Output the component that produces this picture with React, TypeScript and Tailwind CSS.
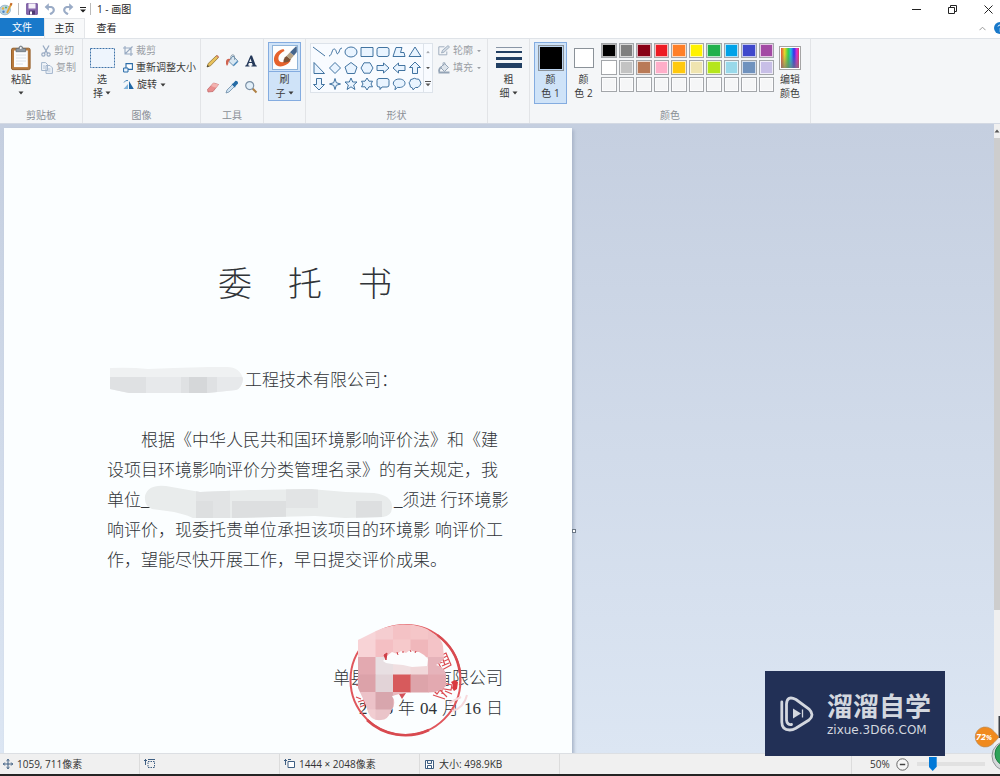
import React from "react";

const BLUE = "#2e6496";

function Caret({ className = "" }: { className?: string }) {
  return (
    <svg className={className} width="6" height="4" viewBox="0 0 6 4" aria-hidden="true">
      <path d="M0.5 0.5h5L3 3.6z" fill="currentColor" />
    </svg>
  );
}

function Group({ label, className, children }: { label?: string; className: string; children: React.ReactNode }) {
  return (
    <section className={`flex shrink-0 flex-col border-r border-[#e2e4e7] ${className}`}>
      <div className="flex h-[68px] items-start pt-[3px]">{children}</div>
      <h2 className="h-4 text-center leading-4 text-[#8a8f96]">{label}</h2>
    </section>
  );
}

function BigButton({
  icon,
  lines,
  caret,
  className = "",
}: {
  icon: React.ReactNode;
  lines: [string, string];
  caret?: boolean;
  className?: string;
}) {
  return (
    <button type="button" className={`flex shrink-0 flex-col items-center border text-[#3b3b3b] ${className}`}>
      <span className="flex h-[29px] items-center justify-center">{icon}</span>
      <span className="h-[14px] leading-[14px]">{lines[0]}</span>
      <span className="flex h-[14px] items-center justify-center gap-0.5 leading-[14px]">
        {lines[1]}
        {caret && <Caret />}
      </span>
    </button>
  );
}

function SmallButton({
  icon,
  label,
  caret,
  disabled,
}: {
  icon: React.ReactNode;
  label: string;
  caret?: boolean;
  disabled?: boolean;
}) {
  return (
    <button
      type="button"
      disabled={disabled}
      className="flex h-[17px] items-center gap-[3px] whitespace-nowrap text-[#3b3b3b] disabled:text-[#9b9fa5]"
    >
      {icon}
      <span>{label}</span>
      {caret && <Caret className={disabled ? "scale-75" : ""} />}
    </button>
  );
}

const AppIcon = () => (
  <svg width="13" height="14" viewBox="0 0 13 14" aria-hidden="true">
    <ellipse cx="5" cy="8" rx="5.5" ry="4.8" fill="#b9d4e4" stroke="#86a9bd" strokeWidth=".7" />
    <circle cx="3" cy="6.5" r="1.2" fill="#e9b245" />
    <circle cx="6" cy="5.5" r="1.1" fill="#5fae64" />
    <circle cx="3.5" cy="9.8" r="1.2" fill="#4d84c4" />
    <path d="M7 11L11.5 1.5" stroke="#e2a53a" strokeWidth="1.8" />
    <path d="M10.6 3.4l1-2.2" stroke="#c46a2e" strokeWidth="2" />
  </svg>
);

const SaveIcon = () => (
  <svg width="12" height="12" viewBox="0 0 12 12" aria-hidden="true">
    <path d="M.7.7h10.6v10.6H.7z" fill="#8a6aae" stroke="#71509a" />
    <path d="M2.5.5h7v5h-7z" fill="#f5f1fa" />
    <path d="M3 7.5h6v4H3z" fill="#4e3a70" />
    <path d="M4 8.5h2v3H4z" fill="#fff" />
  </svg>
);

const UndoIcon = ({ flip }: { flip?: boolean }) => (
  <svg width="12" height="12" viewBox="0 0 12 12" className={flip ? "-scale-x-100" : ""} aria-hidden="true">
    <path d="M3 4h4.200a3.200 3.200 0 0 1 .8 6L6 11.200" fill="none" stroke="#9aabc6" strokeWidth="2.200" />
    <path d="M4.800.2v7.600L.6 4z" fill="#9aabc6" />
  </svg>
);

const PasteIcon = () => (
  <svg width="22" height="26" viewBox="0 0 22 26" aria-hidden="true">
    <rect x="1.5" y="3.2" width="18.6" height="21.4" rx="1.5" fill="#b87a3d" stroke="#96612c" />
    <rect x="4" y="5.5" width="13.8" height="16.6" fill="#fbfcfd" />
    <path d="M6 10h10M6 13h10M6 16h10M6 19h7" stroke="#d3dae2" strokeWidth=".8" />
    <path d="M6 3.5h2.7Q9 1 10.8 1T13 3.5h2.7v3.2H6z" fill="#8d969f" stroke="#626b74" strokeWidth=".7" />
    <circle cx="10.8" cy="3" r=".9" fill="#fff" />
  </svg>
);

const CutIcon = () => (
  <svg width="10" height="12" viewBox="0 0 10 12" aria-hidden="true">
    <path d="M2 .5l4.6 8M8 .5L3.4 8.500" stroke="#98aac2" strokeWidth="1.3" />
    <circle cx="2.400" cy="9.500" r="1.600" fill="none" stroke="#98aac2" strokeWidth="1.200" />
    <circle cx="7.600" cy="9.500" r="1.600" fill="none" stroke="#98aac2" strokeWidth="1.200" />
  </svg>
);

const CopyIcon = () => (
  <svg width="12" height="12" viewBox="0 0 12 12" aria-hidden="true">
    <path d="M.6.6h4L6.500 2.500v6H.6zM5 3.500h4l2.400 2.400v5.500H5z" fill="#f1f5fa" stroke="#a2b5cc" />
    <path d="M2 4h2M2 6h2M6.500 7h3M6.500 9h3" stroke="#a2b5cc" strokeWidth=".8" />
  </svg>
);

const SelectIcon = () => (
  <svg width="25" height="20" viewBox="0 0 25 20" aria-hidden="true">
    <rect x=".5" y=".5" width="24" height="19" fill="#eef5fd" stroke="#3e73a8" strokeDasharray="2 1" />
  </svg>
);

const CropIcon = () => (
  <svg width="10" height="10" viewBox="0 0 10 10" aria-hidden="true">
    <path d="M2 0v8h8M0 2h8v8M2 8L9.500.5" fill="none" stroke="#98aac2" strokeWidth="1.100" />
  </svg>
);

const ResizeIcon = () => (
  <svg width="10" height="10" viewBox="0 0 10 10" aria-hidden="true">
    <path d="M3 .6h6.400v5.800H3z" fill="#fff" stroke="#2b6ca8" strokeWidth="1.100" />
    <path d="M.6 5h4.400v4H.6z" fill="#e8f3fd" stroke="#2b6ca8" />
  </svg>
);

const RotateIcon = () => (
  <svg width="11" height="11" viewBox="0 0 11 11" aria-hidden="true">
    <path d="M6 10V2l4.800 8z" fill="#1e66a5" />
    <path d="M5 10H.5L5 5z" fill="#7fb2da" />
    <path d="M1 3.500Q2.500.8 5 1.500" fill="none" stroke="#4a87b8" />
  </svg>
);

const tools: { name: string; art: React.ReactNode }[] = [
  {
    name: "铅笔",
    art: (
      <>
        <path d="M1 13l1.200-3.500L10.500 1.500l2 2L4.500 11.800z" fill="#e8c15c" stroke="#8e7336" strokeWidth=".8" />
        <path d="M10 2l2 2 1-1.300L11.400 1z" fill="#cc7c6a" />
        <path d="M1 13l.7-2 1.400 1.300z" fill="#333" />
      </>
    ),
  },
  {
    name: "用颜色填充",
    art: (
      <>
        <path d="M3.500 7L8 2l5 5.200-4.600 4.600z" fill="#d8e7f2" stroke="#5f87a8" strokeWidth=".9" />
        <path d="M6 5.500Q5 1 8 .8q2 0 1.500 5" fill="none" stroke="#71889a" strokeWidth=".8" />
        <path d="M5.500 5Q1.500 4 1 7.500T2 12q1.600-1.600 1.500-4z" fill="#cf6552" />
        <path d="M8.500 11.500l4-4" stroke="#4486ba" strokeWidth="1.300" />
      </>
    ),
  },
  {
    name: "文本",
    art: (
      <path
        d="M6.500 1.500h1.500l3.600 9.600 1.200.7v.7H7.400v-.7l1.300-.5-.8-2.200H4.900l-.8 2.200 1.400.5v.7H1.200v-.7l1.200-.7zM6.400 4.600L5.200 8h2.500z"
        fill="#25395a"
      />
    ),
  },
  {
    name: "橡皮擦",
    art: (
      <>
        <path d="M1.500 9.500L7.500 3 12.500 4.500 7 11.500 2 12z" fill="#e98d8d" stroke="#bd6464" strokeWidth=".7" />
        <path d="M7.500 3l5 1.500L10 7.800 5 6z" fill="#f3b3b0" />
      </>
    ),
  },
  {
    name: "颜色选取器",
    art: (
      <>
        <path d="M1 13l1-3 5.500-5.500 2 2L4 12z" fill="#cfe3f4" stroke="#6b8aa6" strokeWidth=".8" />
        <path d="M6.500 4l1.500-.6L10.500.8q2.700 0 2.500 2.600L10.600 6l-.6 1.700z" fill="#256ba5" />
      </>
    ),
  },
  {
    name: "放大镜",
    art: (
      <>
        <path d="M8.500 8.500l4 4" stroke="#af8145" strokeWidth="2" />
        <circle cx="5.700" cy="5.600" r="4" fill="#e2eff9" stroke="#7c91a6" strokeWidth="1.200" />
      </>
    ),
  },
];

const shapes: [string, string][] = [
  ["直线", "M1 2l12 9"],
  ["曲线", "M1 11C4 11 4 3 6.500 4S8 10 10 8.500 11 3 14 3"],
  ["椭圆形", "M1 7a6 5 0 1 0 12 0a6 5 0 1 0 -12 0z"],
  ["矩形", "M1 2.500h12v9H1z"],
  ["圆角矩形", "M3 2.500h8q2 0 2 2v5q0 2-2 2H3q-2 0-2-2v-5q0-2 2-2z"],
  ["多边形", "M1 11.500L4 2.500h6L8.500 7.500h3.500l1 4z"],
  ["三角形", "M7 2l6 9.500H1z"],
  ["直角三角形", "M2 1.500v11h10.500z"],
  ["菱形", "M7 1.500L12.500 7 7 12.500 1.500 7z"],
  ["五边形", "M7 1.500L13 6l-2.300 6.500H3.300L1 6z"],
  ["六边形", "M4 1.800h6L13 7l-3 5.200H4L1 7z"],
  ["右箭头", "M1 4.500h6.500V2L13 7l-5.500 5V9.500H1z"],
  ["左箭头", "M13 4.500H6.500V2L1 7l5.500 5V9.500H13z"],
  ["上箭头", "M7 1l5.500 5.500h-3v6h-5v-6h-3z"],
  ["下箭头", "M7 13l5.500-5.500h-3v-6h-5v6h-3z"],
  ["四角星", "M7 1.500l1.300 4.200L12.500 7 8.300 8.300 7 12.500 5.700 8.300 1.500 7l4.200-1.300z"],
  ["五角星", "M7 1l1.700 4H13L9.700 8l1.200 4.500L7 9.800l-3.900 2.700L4.300 8 1 5h4.300z"],
  ["六角星", "M7 1l2 3.200h3.500L11 7l1.500 2.800H9L7 13 5 9.800H1.500L3 7 1.500 4.200H5z"],
  ["圆角标注", "M3 1.500h8q2 0 2 2v4.500q0 2-2 2H6L4 12.500V10H3q-2 0-2-2V3.500q0-2 2-2z"],
  ["椭圆标注", "M7 2C15 2 15 10.500 7 10.500l-1.500-.2L3 12.800 3.500 9.600C-1 7 2 2 7 2z"],
  ["云形标注", "M4 2.200Q6.500.5 8.500 2q3-.5 3.500 2 2 2.500-.2 4.600-1.300 2.700-4.300 1.900L5 12.800 4.500 11Q1.500 10.500 2 8 0 5.500 2.200 4.200 2 2.200 4 2.200z"],
];

const OutlineIcon = () => (
  <svg width="12" height="11" viewBox="0 0 12 11" aria-hidden="true">
    <path d="M6.500 1.800H.8v8h8V6.500" fill="none" stroke="#a1afbf" />
    <path d="M3.500 8l1-2.700L10 .6l1.500 1.400L6 7.200z" fill="#d4dce5" stroke="#94a4b6" strokeWidth=".8" />
  </svg>
);

const FillIcon = () => (
  <svg width="12" height="12" viewBox="0 0 12 12" aria-hidden="true">
    <path d="M2.500 5.500L6.500 1.500l4 4-4 4z" fill="#dde4eb" stroke="#94a4b6" />
    <path d="M3.500 5Q1 6 1 9.500M.5 10.500h11" fill="none" stroke="#94a4b6" strokeWidth="1.800" />
    <path d="M5 4V.8h2V3" fill="none" stroke="#94a4b6" strokeWidth=".8" />
  </svg>
);

const BrushIcon = () => (
  <svg width="26" height="25" viewBox="0 0 26 25" aria-hidden="true">
    <rect x=".5" y=".5" width="25" height="24" fill="#fdfefe" stroke="#8fb4d9" />
    <path d="M11.500 4C4 5.500.5 12 2.500 17.500 4.500 23 13 23 18.500 16l-3-1.500C12 18 7.500 18 6.500 14.500 6 11 8 8 12.500 6z" fill="#e5622d" />
    <path d="M11.500 17.500q-.5-4 3-6.500l4.500 3.500q-2 3.500-7.500 3z" fill="#7d5336" />
    <path d="M14.500 11L18 7.300l4 3.200-3.500 4z" fill="#b5a184" />
    <path d="M18 7.300L23.800 1.500h1V7L22 10.500z" fill="#45658c" />
  </svg>
);

const SizeIcon = () => (
  <svg width="26" height="24" viewBox="0 0 26 24" aria-hidden="true">
    <path d="M0 1.500h26" stroke="#8996a6" />
    <path d="M0 6h26" stroke="#213f63" strokeWidth="2" />
    <path d="M0 12.500h26" stroke="#213f63" strokeWidth="3" />
    <path d="M0 19.500h26" stroke="#213f63" strokeWidth="5" />
  </svg>
);

const SpectrumIcon = () => (
  <svg width="22" height="24" viewBox="0 0 22 24" aria-hidden="true">
    <defs>
      <linearGradient id="hue">
        <stop offset="0" stopColor="#e0503c" />
        <stop offset=".2" stopColor="#e5d82c" />
        <stop offset=".4" stopColor="#35cf4b" />
        <stop offset=".55" stopColor="#22b8e6" />
        <stop offset=".72" stopColor="#3232ea" />
        <stop offset=".88" stopColor="#df2fd0" />
        <stop offset="1" stopColor="#e2385c" />
      </linearGradient>
      <linearGradient id="shade" x2="0" y2="1">
        <stop offset=".3" stopColor="#777" stopOpacity="0" />
        <stop offset="1" stopColor="#777" stopOpacity=".7" />
      </linearGradient>
    </defs>
    <rect x=".5" y=".5" width="21" height="23" fill="#fff" stroke="#a5a5a5" />
    <rect x="2" y="2" width="18" height="20" fill="url(#hue)" />
    <rect x="2" y="2" width="18" height="20" fill="url(#shade)" />
  </svg>
);

const swatches: [string, string][] = [
  ["黑色", "bg-[#000000]"],
  ["灰色-50%", "bg-[#7f7f7f]"],
  ["深红色", "bg-[#880015]"],
  ["红色", "bg-[#ed1c24]"],
  ["橙色", "bg-[#ff7f27]"],
  ["黄色", "bg-[#fff200]"],
  ["绿色", "bg-[#22b14c]"],
  ["青绿色", "bg-[#00a2e8]"],
  ["靛蓝色", "bg-[#3f48cc]"],
  ["紫色", "bg-[#a349a4]"],
  ["白色", "bg-[#ffffff]"],
  ["灰色-25%", "bg-[#c3c3c3]"],
  ["褐色", "bg-[#b97a57]"],
  ["玫瑰色", "bg-[#ffaec9]"],
  ["金色", "bg-[#ffc90e]"],
  ["浅黄色", "bg-[#efe4b0]"],
  ["酸橙色", "bg-[#b5e61d]"],
  ["淡青绿色", "bg-[#99d9ea]"],
  ["蓝灰色", "bg-[#7092be]"],
  ["淡紫色", "bg-[#c8bfe7]"],
  ...Array.from({ length: 10 }, (_, i): [string, string] => [`自定义颜色 ${i + 1}`, "bg-[#f5f6f7]"]),
];

function Ribbon() {
  return (
    <div className="flex h-[86px] shrink-0 overflow-hidden border-y border-t-[#dfe3e8] border-b-[#d3d9e3] bg-[#f4f6f8]">
      <Group label="剪贴板" className="w-[83px]">
        <BigButton icon={<PasteIcon />} lines={["粘贴", ""]} caret className="ml-1 w-[34px] border-transparent" />
        <div className="ml-[3px] flex flex-col">
          <SmallButton disabled icon={<CutIcon />} label="剪切" />
          <SmallButton disabled icon={<CopyIcon />} label="复制" />
        </div>
      </Group>
      <Group label="图像" className="w-[118px]">
        <BigButton icon={<SelectIcon />} lines={["选", "择"]} caret className="ml-[2px] w-[34px] border-transparent" />
        <div className="ml-1 flex flex-col">
          <SmallButton disabled icon={<CropIcon />} label="裁剪" />
          <SmallButton icon={<ResizeIcon />} label="重新调整大小" />
          <SmallButton icon={<RotateIcon />} label="旋转" caret />
        </div>
      </Group>
      <Group label="工具" className="w-[63px]">
        <div className="grid w-full grid-cols-3 gap-y-3 px-[3px] pt-3">
          {tools.map((t) => (
            <button key={t.name} type="button" aria-label={t.name} className="flex justify-center">
              <svg width="14" height="14" viewBox="0 0 14 14" aria-hidden="true">
                {t.art}
              </svg>
            </button>
          ))}
        </div>
      </Group>
      <Group className="w-[42px]">
        <BigButton
          icon={<BrushIcon />}
          lines={["刷", "子"]}
          caret
          className="mx-auto w-[33px] border-[#84ace0] bg-[linear-gradient(#cfe3f8_28px,#84ace0_28px,#84ace0_29px,#cfe3f8_29px)]"
        />
      </Group>
      <Group label="形状" className="w-[182px]">
        <div className="mt-px ml-1 flex border border-[#dde3ea] bg-[#f8fbff]">
          <div className="grid grid-cols-7">
            {shapes.map(([name, d]) => (
              <button key={name} type="button" aria-label={name} className="flex h-4 w-4 items-center justify-center">
                <svg width="14" height="14" viewBox="0 0 14 14" aria-hidden="true">
                  <path d={d} fill={name === "直线" || name === "曲线" ? "none" : "#e9f4ff"} stroke={BLUE} strokeWidth=".9" />
                </svg>
              </button>
            ))}
          </div>
          <div className="flex w-[9px] flex-col border-l border-[#dde3ea] text-[#555]">
            <button type="button" aria-label="向上滚动" className="flex flex-1 items-center justify-center text-[#a5a9ae]">
              <Caret className="rotate-180 scale-75" />
            </button>
            <button type="button" aria-label="向下滚动" className="flex flex-1 items-center justify-center">
              <Caret className="scale-75" />
            </button>
            <button type="button" aria-label="更多形状" className="flex flex-1 items-center justify-center">
              <svg width="6" height="6" viewBox="0 0 6 6" aria-hidden="true">
                <path d="M0 .5h6" stroke="currentColor" />
                <path d="M.5 2.500h5L3 5.300z" fill="currentColor" />
              </svg>
            </button>
          </div>
        </div>
        <div className="ml-[5px] flex flex-col">
          <SmallButton disabled icon={<OutlineIcon />} label="轮廓" caret />
          <SmallButton disabled icon={<FillIcon />} label="填充" caret />
        </div>
      </Group>
      <Group className="w-[42px]">
        <BigButton icon={<SizeIcon />} lines={["粗", "细"]} caret className="mx-auto w-[34px] border-transparent" />
      </Group>
      <Group label="颜色" className="w-[281px]">
        <BigButton
          icon={<span className="size-[26px] border border-[#8b9299] bg-black ring-1 ring-[#bcd4ef] ring-inset" />}
          lines={["颜", "色 1"]}
          className="ml-1 h-[62px] w-[33px] border-[#84ace0] bg-[#cfe3f8]"
        />
        <BigButton
          icon={<span className="size-[20px] border border-[#8b9299] bg-white" />}
          lines={["颜", "色 2"]}
          className="w-[33px] border-transparent"
        />
        <div className="mt-px ml-px grid w-[173px] grid-cols-10 gap-[2px]">
          {swatches.map(([name, color]) => (
            <button
              key={name}
              type="button"
              aria-label={name}
              className={`h-[15px] border border-[#a3a6aa] ring-1 ring-white/70 ring-inset ${color}`}
            />
          ))}
        </div>
        <BigButton icon={<SpectrumIcon />} lines={["编辑", "颜色"]} className="w-[32px] border-transparent" />
      </Group>
    </div>
  );
}

function Seal() {
  const cells: [number, number, string][] = [
    [0, 0, "#f7d5d8"], [1, 0, "#f5cdd0"], [2, 0, "#f4c2c5"], [3, 0, "#f5c6c8"], [4, 0, "#f2c2c5"],
    [0, 1, "#f8d3d6"], [1, 1, "#f4bfc3"], [2, 1, "#f6c9cb"], [3, 1, "#f0b7bb"], [4, 1, "#f4c3c7"],
    [0, 2, "#e3a9b0"], [1, 2, "#e8dfe2"], [2, 2, "#f0dfe1"], [3, 2, "#f1d8da"], [4, 2, "#e6b3ba"],
    [0, 3, "#dca2a9"], [1, 3, "#e2d3d7"], [2, 3, "#d75a5c"], [3, 3, "#dda4aa"], [4, 3, "#e3a9b0"],
    [0, 4, "#ecc2c8"], [1, 4, "#d8a6ad"], [2, 4, "#e8b8bd"],
    [0, 5, "#f1cdd1"], [1, 5, "#eac4c9"],
  ];
  return (
    <svg
      className="absolute right-[32px] -bottom-[17px]"
      width="126"
      height="122"
      viewBox="0 0 126 122"
      aria-hidden="true"
    >
      <defs>
        <clipPath id="smudge">
          <path d="M13 21L31 12Q44 6 58 5.500 78 5 88 14 97 20 98 27L99 39Q96 44 91 46 99 48 101 55V67Q96 73 83 74H58L47 77Q52 84 46 92 43 101 36 101 27 102 24 95L20 84 13 69z" />
        </clipPath>
      </defs>
      <circle cx="60.500" cy="61" r="55" fill="none" stroke="#e0565c" strokeWidth="2" />
      <path d="M92 16a55.500 55.500 0 0 1 23 38M22 101a56 56 0 0 0 62 10" fill="none" stroke="#d84a50" strokeWidth="2.600" />
      <g stroke="#dc4b52" strokeWidth="1.200" fill="none">
        <path d="M91 39l10-5 5 12-9 5zM94 41l8-4M95 44l9-4M97 47l7-3M97 38l3 8M88 46l6 6" />
        <path d="M87 70l5 5 3-4M92 63l15 3-1 5-13-2 9 9M97 62v13M100 72l7 3M88 76l12 4M86 65l6 2" />
        <path d="M11 78l5 2M13 83l6-2 1 5-5 2M12 60l5 3M11 66l5 1" />
      </g>
      <path d="M106 63l4-2 3 2-1 7-3 2-2-3 1-3z" fill="#d9383f" />
      <path d="M107 92q12-3 15-16M104 84l12-6" fill="none" stroke="#f7d9dc" strokeWidth="2" />
      <g clipPath="url(#smudge)">
        {cells.map(([c, r, fill]) => (
          <rect key={`${c}-${r}`} x={13 + c * 17.5} y={3 + r * 17.5} width="18" height="18" fill={fill} />
        ))}
      </g>
      <path d="M38 42l5-6 4-3 5 2 4-3 5 2 4-3 5 2 4 0 5 3 4 4-1 7-15 1-9-2-11-1-6-1z" fill="#fcfdfe" />
      <path d="M39 36l3-2-1 7zM52 33l1 3M58 32v2M65 31l1 2M71 32l-1 2" stroke="#cf3e46" fill="#cf3e46" />
      <path d="M54 75l7-1-4 6z" fill="#d4525a" />
    </svg>
  );
}

function Smear({ wide }: { wide?: boolean }) {
  if (wide) {
    return (
      <svg className="-ml-4 shrink-0" width="252" height="34" viewBox="0 0 252 34" aria-hidden="true">
        <defs>
          <clipPath id="smear-wide">
            <path d="M3 12Q6 0 24 2l34 6 50-2 60-1 36 3 28 1q18 2 18 14 0 9-9 10l-38 1-30-2-80 2-40 1q-12-6-28-8L10 25Q2 22 3 12z" />
          </clipPath>
        </defs>
        <g clipPath="url(#smear-wide)">
          <path d="M0 0h254v34H0z" fill="#e9ecec" />
          <path d="M54 6h34v28H54zM144 0h32v24h-32z" fill="#e2e4e5" />
          <path d="M54 17h17v17H54zM90 17h54v17H90zM214 17h26v17h-26z" fill="#dddfe0" />
        </g>
      </svg>
    );
  }
  return (
    <svg className="shrink-0" width="138" height="30" viewBox="0 0 138 30" aria-hidden="true">
      <defs>
        <clipPath id="smear">
          <path d="M3 2q20-1 38 1l26-1 35-1h18q13 0 16 12-1 9-7 11l-28 3H22q-10-2-19-4z" />
        </clipPath>
      </defs>
      <g clipPath="url(#smear)">
        <path d="M0 0h138v30H0z" fill="#eff1f2" />
        <path d="M3 11h36v17H3zM74 11h36v17H74z" fill="#dfe1e3" />
        <path d="M39 11h35v17H39zM110 11h28v17h-28z" fill="#e7e9eb" />
        <path d="M82 11h18v17H82z" fill="#d5d7d9" />
      </g>
    </svg>
  );
}

function Letter() {
  return (
    <article className="relative w-[568px] shrink-0 bg-[#fbfeff] pt-[137px] pr-[69px] pl-[103px] font-['Liberation_Serif','Noto_Sans_CJK_SC',serif] text-[17px] leading-[30px] font-light whitespace-nowrap text-[#303438] shadow-[2px_2px_3px_#a9b5c9]">
      <h1 className="flex justify-center gap-9 text-[34px] leading-10">
        <span>委</span>
        <span>托</span>
        <span>书</span>
      </h1>
      <p className="mt-[61px] flex h-[30px] items-center">
        <Smear />
        工程技术有限公司：
      </p>
      <div className="mt-[30px]">
        <p className="pl-[34px]">根据《中华人民共和国环境影响评价法》和《建</p>
        <p>设项目环境影响评价分类管理名录》的有关规定，我</p>
        <p className="flex h-[30px] items-center">
          <span>单位__</span>
          <Smear wide />
          <span>_须进</span>
          <span className="ml-1">行环境影</span>
        </p>
        <p className="flex justify-between">
          <span>响评价，现委托贵单位承担该项目的环境影</span>
          <span>响评价工</span>
        </p>
        <p>作，望能尽快开展工作，早日提交评价成果。</p>
      </div>
      <footer className="relative mt-[88px]">
        <p className="flex justify-end gap-[68px]">
          <span>单县</span>
          <span>有限公司</span>
        </p>
        <p className="flex justify-end gap-[5px]">
          <span>2016</span>
          <span>年</span>
          <span>04</span>
          <span>月</span>
          <span>16</span>
          <span>日</span>
        </p>
        <Seal />
      </footer>
      <span className="absolute top-[401px] -right-1 size-1 border border-[#6b7785] bg-white" />
    </article>
  );
}

function StatusBar() {
  return (
    <footer className="flex h-[23px] shrink-0 border-t border-b-2 border-t-[#dcdfe3] border-b-[#242424] bg-[#f0f0f0] whitespace-nowrap text-[#333]">
      <div className="flex w-[140px] items-center gap-1 border-r border-[#dcdcdc] pl-[3px]">
        <svg width="10" height="10" viewBox="0 0 10 10" aria-hidden="true">
          <path d="M5 0v10M0 5h10M3.500 1.800L5 .4l1.500 1.400M3.500 8.200L5 9.600l1.500-1.400M1.800 3.500L.4 5l1.400 1.500M8.200 3.500L9.600 5 8.200 6.500" fill="none" stroke="#3f5f82" />
        </svg>
        1059, 711像素
      </div>
      <div className="flex w-[140px] items-center border-r border-[#dcdcdc] pl-1">
        <svg width="11" height="10" viewBox="0 0 11 10" aria-hidden="true">
          <path d="M1.500 0v6M0 1.500h3M4 .5h7" stroke="#3f5f82" />
          <path d="M4 2.500h6.500v6H4z" fill="none" stroke="#3f5f82" strokeDasharray="1.500 1" />
        </svg>
      </div>
      <div className="flex w-[140px] items-center gap-1 border-r border-[#dcdcdc] pl-1">
        <svg width="11" height="10" viewBox="0 0 11 10" aria-hidden="true">
          <path d="M1.500 0v6M0 1.500h3M4 .5h3" stroke="#3f5f82" />
          <path d="M4 2.500h6.500v6H4z" fill="#fff" stroke="#3f5f82" />
        </svg>
        1444 × 2048像素
      </div>
      <div className="flex w-[140px] items-center gap-[5px] border-r border-[#dcdcdc] pl-[5px]">
        <svg width="9" height="9" viewBox="0 0 9 9" aria-hidden="true">
          <path d="M.5.5h8v8h-8zM2.500.5v3h4v-3M2.500 8.500v-3h4v3" fill="#fff" stroke="#3f5f82" />
        </svg>
        大小: 498.9KB
      </div>
      <div className="flex-1 border-r border-[#dcdcdc]" />
      <div className="flex w-[148px] items-center pl-[18px]">
        <label htmlFor="zoom">50%</label>
        <button type="button" aria-label="缩小" className="ml-[6px]">
          <svg width="13" height="13" viewBox="0 0 13 13" aria-hidden="true">
            <circle cx="6.500" cy="6.500" r="5.700" fill="#f7f7f7" stroke="#666" />
            <path d="M3.800 6.500h5.400" stroke="#444" strokeWidth="1.500" />
          </svg>
        </button>
        <input
          id="zoom"
          type="range"
          defaultValue={20}
          className="ml-2 h-[14px] w-[68px] appearance-none bg-transparent [&::-webkit-slider-runnable-track]:h-[14px] [&::-webkit-slider-runnable-track]:bg-[linear-gradient(transparent_5px,#e1e1e1_5px,#e1e1e1_9px,transparent_9px)] [&::-webkit-slider-thumb]:h-[14px] [&::-webkit-slider-thumb]:w-2 [&::-webkit-slider-thumb]:appearance-none [&::-webkit-slider-thumb]:bg-[#0078d7] [&::-webkit-slider-thumb]:[clip-path:polygon(0_0,100%_0,100%_70%,50%_100%,0_70%)]"
        />
      </div>
    </footer>
  );
}

export default function App() {
  return (
    <div className="relative flex min-h-screen flex-col overflow-hidden bg-white font-['Open_Sans','Noto_Sans_CJK_SC',sans-serif] text-[10px] text-[#222]">
      <header className="flex h-[18px] shrink-0 items-center">
        <AppIcon />
        <span className="ml-[5px] h-3 w-px bg-[#bbb]" />
        <div className="ml-[7px] flex items-center gap-[6px]">
          <button type="button" aria-label="保存"><SaveIcon /></button>
          <button type="button" aria-label="撤消"><UndoIcon /></button>
          <button type="button" aria-label="重做"><UndoIcon flip /></button>
          <button type="button" aria-label="自定义快速访问工具栏" className="pt-0.5">
            <svg width="6" height="6" viewBox="0 0 6 6" aria-hidden="true">
              <path d="M0 0h6v1H0zM0 2.500h6L3 5.500z" fill="#222" />
            </svg>
          </button>
        </div>
        <span className="ml-1 h-3 w-px bg-[#bbb]" />
        <h1 className="ml-[6px]">1 - 画图</h1>
        <div className="ml-auto flex items-center gap-[27px] pr-[7px]">
          <button type="button" aria-label="最小化">
            <svg width="9" height="9" viewBox="0 0 9 9" aria-hidden="true"><path d="M0 4.500h9" stroke="#222" /></svg>
          </button>
          <button type="button" aria-label="还原">
            <svg width="9" height="9" viewBox="0 0 9 9" aria-hidden="true">
              <path d="M.5 2.500h6v6h-6zM2.500 2.500v-2h6v6h-2" fill="none" stroke="#222" />
            </svg>
          </button>
          <button type="button" aria-label="关闭">
            <svg width="9" height="9" viewBox="0 0 9 9" aria-hidden="true"><path d="M.5.5l8 8M8.500.5l-8 8" stroke="#222" /></svg>
          </button>
        </div>
      </header>
      <nav className="flex h-5 shrink-0 items-stretch">
        <button type="button" className="mb-[2px] w-11 bg-[#1979ca] text-white">文件</button>
        <button type="button" className="w-[41px] border-x border-t border-[#e4e6e9] bg-[#f8f9fa]">主页</button>
        <button type="button" className="w-[43px]">查看</button>
        <div className="ml-auto flex items-center gap-2">
          <button type="button" aria-label="折叠功能区">
            <svg width="7" height="5" viewBox="0 0 7 5" aria-hidden="true">
              <path d="M.5 4.200l3-3 3 3" fill="none" stroke="#999" />
            </svg>
          </button>
          <button type="button" aria-label="帮助">
            <svg width="6" height="12" viewBox="0 0 6 12" aria-hidden="true">
              <circle cx="6" cy="6" r="6" fill="#1979ca" />
              <path d="M4 4.500q.3-1.500 2-1.500M6 6.500v1M6 8.500v1" fill="none" stroke="#fff" />
            </svg>
          </button>
        </div>
      </nav>
      <Ribbon />
      <main className="flex min-h-[629px] flex-1 bg-linear-to-b from-[#c5cfe0] to-[#dce6f3]">
        <div className="flex flex-1 overflow-hidden pt-1 pl-1">
          <Letter />
        </div>
        <div className="flex w-[6px] flex-col bg-[#f0f0f0]">
          <Caret className="mx-auto my-[5px] rotate-180 text-[#555]" />
          <div className="h-3/4 bg-[#cdcdcd]" />
        </div>
      </main>
      <StatusBar />

      <aside className="absolute right-[55px] bottom-5 flex h-[85px] w-[180px] items-center gap-3 bg-[#223056] pl-[15px] text-[#d3d7df]">
        <svg width="35" height="36" viewBox="0 0 35 36" aria-hidden="true">
          <path d="M1.800 6v20q0 8 8 8 3 0 6-1.700L29 24q6-5 0-11L16 3.500Q7-1 6.500 8v16q.5 5 5 4.500" fill="none" stroke="currentColor" strokeWidth="2.800" strokeLinecap="round" />
          <path d="M13 12.500l8 5-8 5z" fill="currentColor" />
          <path d="M22.500 13.500v8" stroke="currentColor" strokeWidth="1.300" />
        </svg>
        <div>
          <p className="h-7 text-[26px] leading-7 font-bold">溜溜自学</p>
          <p className="mt-1 font-['DejaVu_Sans',sans-serif] text-[12px] leading-3">zixue.3D66.COM</p>
        </div>
      </aside>
      <div className="absolute right-0 bottom-1 h-[58px] w-[27px]">
        <svg width="27" height="58" viewBox="0 0 27 58" aria-hidden="true">
          <path d="M25.500 2H27v22h-1.500z" fill="#3b4046" />
          <circle cx="34" cy="42" r="15" fill="#d5d8da" stroke="#8f9498" />
          <circle cx="34" cy="40" r="12" fill="#2fa35a" stroke="#1f7d43" />
          <path d="M26 23Q20 30 17.500 31.500A10 10 0 1 1 17.500 14.500Q20 16 26 23z" fill="#f08a1e" stroke="#b98a55" strokeWidth=".7" />
        </svg>
        <span className="absolute top-[17px] left-[3px] text-[9px] leading-3 font-bold text-white italic">
          72<span className="text-[7px]">%</span>
        </span>
      </div>
    </div>
  );
}
